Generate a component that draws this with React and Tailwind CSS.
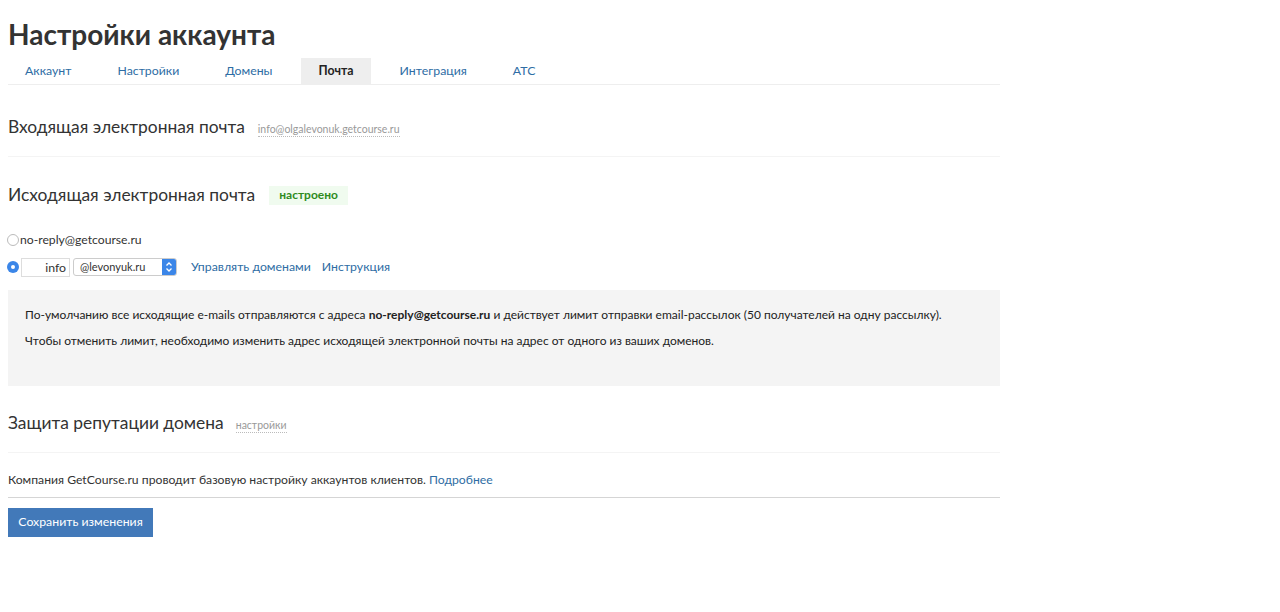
import React from "react";

const font = { fontFamily: "Lato, 'Open Sans', 'Liberation Sans', sans-serif" };

function Tab({ children, active }) {
  return (
    <div
      className={
        "h-[26px] px-[17px] flex items-center text-[12.3px] " +
        (active ? "bg-[#eeeeee] text-[#222] font-bold" : "text-[#2e6da4]")
      }
    >
      {children}
    </div>
  );
}

export default function App() {
  return (
    <div className="bg-white min-h-[612px] text-[#333]" style={font}>
      <div className="w-[992px] ml-[8px]">
        <h1 className="text-[28px] font-bold text-[#333] pt-[16px] leading-[36px]">
          Настройки аккаунта
        </h1>
        <div className="mt-[6px] flex gap-[12px] border-b border-[#eeeeee]">
          <Tab>Аккаунт</Tab>
          <Tab>Настройки</Tab>
          <Tab>Домены</Tab>
          <Tab active>Почта</Tab>
          <Tab>Интеграция</Tab>
          <Tab>АТС</Tab>
        </div>

        <div className="mt-[29px] flex items-baseline gap-[13px] pb-[16px] border-b border-[#f4f4f4]">
          <span className="text-[17.4px]">Входящая электронная почта</span>
          <span className="text-[10.5px] text-[#999] border-b border-dotted border-[#bbb] leading-[14px]">
            info@olgalevonuk.getcourse.ru
          </span>
        </div>

        <div className="mt-[25px] flex items-center gap-[14px]">
          <span className="text-[17.4px]">Исходящая электронная почта</span>
          <span className="bg-[#f0fbef] text-[#2e8b1e] font-bold text-[12px] px-[10px] h-[19px] flex items-center">
            настроено
          </span>
        </div>

        <div className="mt-[23px] flex items-center text-[12.2px]">
          <span className="w-[12px] h-[12px] rounded-full border border-[#bbb] ml-[-1px] mr-[1px]"></span>
          <span>no-reply@getcourse.ru</span>
        </div>

        <div className="mt-[8px] flex items-center text-[12.3px]">
          <span className="w-[12px] h-[12px] rounded-full bg-[#3b86e8] flex items-center justify-center ml-[-1px]">
            <span className="w-[4px] h-[4px] rounded-full bg-white"></span>
          </span>
          <span className="ml-[2px] w-[49px] h-[19px] border border-[#ddd] text-right pr-[3px] leading-[17px]">
            info
          </span>
          <span className="ml-[3px] w-[104px] h-[18px] border border-[#ccc] rounded-[3px] flex items-center text-[11px] pl-[6px] relative">
            @levonyuk.ru
            <span className="absolute right-[0px] top-[0px] bottom-[0px] w-[14px] bg-[#3b86e8] rounded-r-[2px] flex items-center justify-center">
              <svg width="8" height="12" viewBox="0 0 8 12">
                <path d="M1.5 4.5 L4 2 L6.5 4.5 M1.5 7.5 L4 10 L6.5 7.5" stroke="white" strokeWidth="1.3" fill="none" />
              </svg>
            </span>
          </span>
          <span className="ml-[14px] text-[#2e6da4]">Управлять доменами</span>
          <span className="ml-[11px] text-[#2e6da4]">Инструкция</span>
        </div>

        <div className="mt-[13px] bg-[#f4f4f4] h-[96px] px-[17px] pt-[17px] text-[12px] text-[#222]">
          <p className="leading-[16px]">
            По-умолчанию все исходящие e-mails отправляются с адреса <b>no-reply@getcourse.ru</b> и действует лимит отправки email-рассылок (50 получателей на одну рассылку).
          </p>
          <p className="leading-[16px] mt-[10px]">
            Чтобы отменить лимит, необходимо изменить адрес исходящей электронной почты на адрес от одного из ваших доменов.
          </p>
        </div>

        <div className="mt-[24px] flex items-baseline gap-[12px] pb-[16px] border-b border-[#f4f4f4]">
          <span className="text-[17.4px]">Защита репутации домена</span>
          <span className="text-[10.5px] text-[#999] border-b border-dotted border-[#bbb] leading-[14px]">
            настройки
          </span>
        </div>

        <div className="mt-[18px] pb-[8px] text-[12.2px] border-b border-[#d5d5d5]">
          Компания GetCourse.ru проводит базовую настройку аккаунтов клиентов.{" "}
          <span className="text-[#2e6da4]">Подробнее</span>
        </div>

        <button className="mt-[10px] h-[29px] w-[145px] bg-[#4279b9] text-white text-[12.3px]">
          Сохранить изменения
        </button>
      </div>
    </div>
  );
}
